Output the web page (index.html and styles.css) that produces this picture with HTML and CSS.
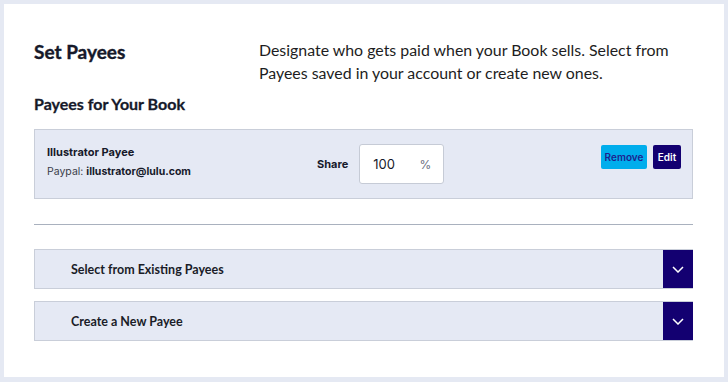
FILE: index.html
```html
<!DOCTYPE html>
<html lang="en">
<head>
<meta charset="utf-8">
<title>Set Payees</title>
<link rel="stylesheet" href="styles.css">
</head>
<body>
<div class="card">
  <div class="intro">
    <h1 class="title">Set Payees</h1>
    <p class="desc">Designate who gets paid when your Book sells. Select from Payees saved in your account or create new ones.</p>
  </div>
  <h2 class="subtitle">Payees for Your Book</h2>
  <div class="payee">
    <div class="payee-info">
      <div class="payee-name">Illustrator Payee</div>
      <div class="payee-email">Paypal: <b>illustrator@lulu.com</b></div>
    </div>
    <label class="share-label">Share</label>
    <div class="share-input"><span class="share-value">100</span><span class="share-pct">%</span></div>
    <div class="actions">
      <button class="btn btn-remove">Remove</button>
      <button class="btn btn-edit">Edit</button>
    </div>
  </div>
  <hr class="divider">
  <div class="accordion">
    <span class="acc-label">Select from Existing Payees</span>
    <span class="acc-toggle"><svg width="12" height="7" viewBox="0 0 12 7"><path d="M1 1l5 5 5-5" fill="none" stroke="#fff" stroke-width="1.5"/></svg></span>
  </div>
  <div class="accordion">
    <span class="acc-label">Create a New Payee</span>
    <span class="acc-toggle"><svg width="12" height="7" viewBox="0 0 12 7"><path d="M1 1l5 5 5-5" fill="none" stroke="#fff" stroke-width="1.5"/></svg></span>
  </div>
</div>
</body>
</html>
```
FILE: styles.css
```css
html, body { margin: 0; padding: 0; }
body {
  background: #e5e9f3;
  padding: 4px;
  font-family: Lato, "Noto Sans", sans-serif;
  color: #16192a;
}
.card {
  background: #fff;
  width: 720px;
  height: 373px;
  box-sizing: border-box;
  padding: 34px 31px 0 30px;
}
.intro {
  display: flex;
  align-items: flex-start;
}
.title {
  margin: 0;
  width: 225px;
  flex: none;
  font-size: 19px;
  font-weight: 700;
  line-height: 23px;
  padding-top: 2px;
  -webkit-text-stroke: 0.4px #16192a;
}
.desc {
  margin: 0;
  font-size: 15.9px;
  line-height: 23px;
  color: #1d1d22;
  width: 430px;
}
.subtitle {
  margin: 10px 0 0;
  font-size: 16px;
  font-weight: 700;
  line-height: 20px;
  -webkit-text-stroke: 0.3px #16192a;
}
.payee {
  margin-top: 15px;
  height: 70px;
  box-sizing: border-box;
  background: #e5e9f4;
  border: 1px solid #c9ced9;
  display: flex;
  align-items: center;
  padding: 0 11px 0 12px;
  font-family: Inter, "Noto Sans", sans-serif;
}
.payee-info {
  width: 270px;
  flex: none;
  padding-bottom: 4px;
}
.payee-name {
  font-size: 11px;
  font-weight: 700;
  line-height: 16px;
}
.payee-email {
  margin-top: 4px;
  font-size: 10.5px;
  line-height: 16px;
  color: #3a3d4a;
}
.payee-email b { color: #16192a; font-weight: 700; }
.share-label {
  font-size: 11px;
  font-weight: 700;
  margin-right: 11px;
}
.share-input {
  width: 85px;
  height: 40px;
  box-sizing: border-box;
  background: #fff;
  border: 1px solid #c6cbd6;
  border-radius: 3px;
  display: flex;
  align-items: center;
  justify-content: space-between;
  padding: 0 12px 0 13px;
}
.share-value { font-size: 13px; color: #16192a; }
.share-pct { font-size: 12px; color: #6b7080; }
.actions {
  margin-left: auto;
  align-self: flex-start;
  margin-top: 15px;
  display: flex;
  gap: 6px;
}
.btn {
  height: 24px;
  border: 0;
  border-radius: 2px;
  font-family: Inter, "Noto Sans", sans-serif;
  font-size: 10px;
  font-weight: 600;
  padding: 0;
}
.btn-remove { width: 46px; background: #00adec; color: #1e1f8e; }
.btn-edit { width: 28px; background: #130071; color: #fff; }
.divider {
  margin: 25px 0 0;
  border: 0;
  height: 1px;
  background: #a9b1be;
}
.accordion {
  margin-top: 24px;
  height: 40px;
  box-sizing: border-box;
  background: #e5e9f4;
  border: 1px solid #c9ced9;
  display: flex;
  align-items: center;
  padding-left: 36px;
}
.accordion + .accordion { margin-top: 12px; }
.acc-label {
  font-size: 12.5px;
  font-weight: 700;
  color: #1a1c28;
}
.acc-toggle {
  margin-left: auto;
  width: 30px;
  height: 38px;
  margin-right: -1px;
  background: #130071;
  display: flex;
  align-items: center;
  justify-content: center;
}
```
